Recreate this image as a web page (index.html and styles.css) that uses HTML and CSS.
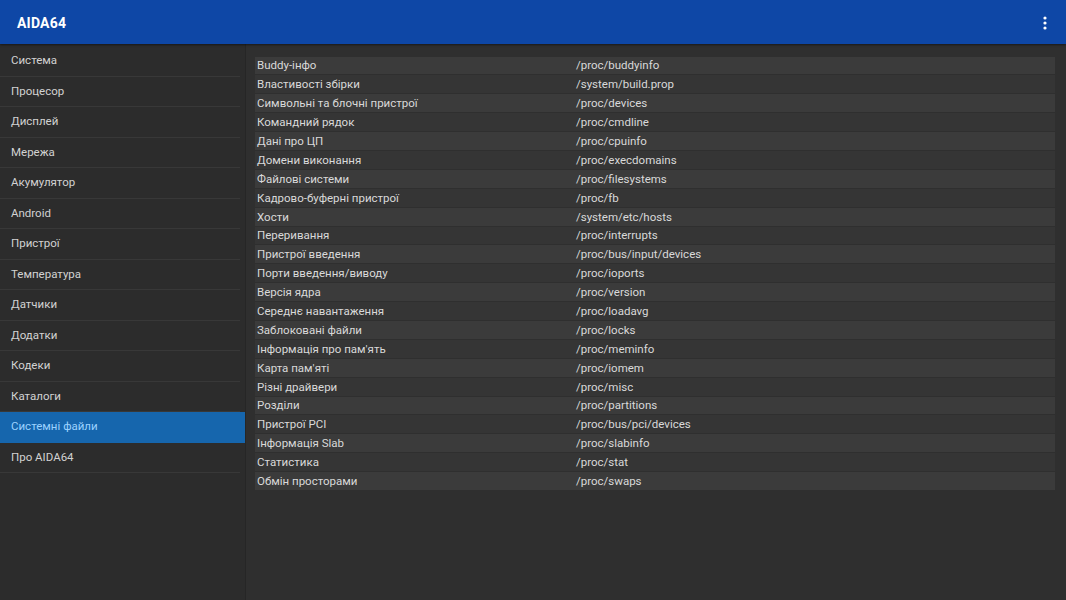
FILE: index.html
```html
<!DOCTYPE html>
<html lang="uk">
<head>
<meta charset="utf-8">
<title>AIDA64</title>
<link rel="stylesheet" href="styles.css">
</head>
<body>
<header class="appbar">
  <div class="title">AIDA64</div>
  <svg class="menu" width="4" height="14" viewBox="0 0 4 14"><circle cx="2" cy="2" r="1.6" fill="#fff"/><circle cx="2" cy="7" r="1.6" fill="#fff"/><circle cx="2" cy="12" r="1.6" fill="#fff"/></svg>
</header>
<div class="main">
  <nav class="sidebar">
    <div class="item">Система</div>
    <div class="item">Процесор</div>
    <div class="item">Дисплей</div>
    <div class="item">Мережа</div>
    <div class="item">Акумулятор</div>
    <div class="item">Android</div>
    <div class="item">Пристрої</div>
    <div class="item">Температура</div>
    <div class="item">Датчики</div>
    <div class="item">Додатки</div>
    <div class="item">Кодеки</div>
    <div class="item">Каталоги</div>
    <div class="item selected">Системні файли</div>
    <div class="item">Про AIDA64</div>
  </nav>
  <section class="content">
    <div class="table">
      <div class="row"><span class="c1">Buddy-інфо</span><span class="c2">/proc/buddyinfo</span></div>
      <div class="row"><span class="c1">Властивості збірки</span><span class="c2">/system/build.prop</span></div>
      <div class="row"><span class="c1">Символьні та блочні пристрої</span><span class="c2">/proc/devices</span></div>
      <div class="row"><span class="c1">Командний рядок</span><span class="c2">/proc/cmdline</span></div>
      <div class="row"><span class="c1">Дані про ЦП</span><span class="c2">/proc/cpuinfo</span></div>
      <div class="row"><span class="c1">Домени виконання</span><span class="c2">/proc/execdomains</span></div>
      <div class="row"><span class="c1">Файлові системи</span><span class="c2">/proc/filesystems</span></div>
      <div class="row"><span class="c1">Кадрово-буферні пристрої</span><span class="c2">/proc/fb</span></div>
      <div class="row"><span class="c1">Хости</span><span class="c2">/system/etc/hosts</span></div>
      <div class="row"><span class="c1">Переривання</span><span class="c2">/proc/interrupts</span></div>
      <div class="row"><span class="c1">Пристрої введення</span><span class="c2">/proc/bus/input/devices</span></div>
      <div class="row"><span class="c1">Порти введення/виводу</span><span class="c2">/proc/ioports</span></div>
      <div class="row"><span class="c1">Версія ядра</span><span class="c2">/proc/version</span></div>
      <div class="row"><span class="c1">Середнє навантаження</span><span class="c2">/proc/loadavg</span></div>
      <div class="row"><span class="c1">Заблоковані файли</span><span class="c2">/proc/locks</span></div>
      <div class="row"><span class="c1">Інформація про пам'ять</span><span class="c2">/proc/meminfo</span></div>
      <div class="row"><span class="c1">Карта пам'яті</span><span class="c2">/proc/iomem</span></div>
      <div class="row"><span class="c1">Різні драйвери</span><span class="c2">/proc/misc</span></div>
      <div class="row"><span class="c1">Розділи</span><span class="c2">/proc/partitions</span></div>
      <div class="row"><span class="c1">Пристрої PCI</span><span class="c2">/proc/bus/pci/devices</span></div>
      <div class="row"><span class="c1">Інформація Slab</span><span class="c2">/proc/slabinfo</span></div>
      <div class="row"><span class="c1">Статистика</span><span class="c2">/proc/stat</span></div>
      <div class="row"><span class="c1">Обмін просторами</span><span class="c2">/proc/swaps</span></div>
    </div>
  </section>
</div>
</body>
</html>
```
FILE: styles.css
```css
html, body {
  margin: 0;
  padding: 0;
  height: 100%;
}
body {
  background: #2f2f2f;
  font-family: Roboto, "Noto Sans", sans-serif;
  color: #d6d6d6;
  display: flex;
  flex-direction: column;
  overflow: hidden;
}
.appbar {
  height: 44px;
  flex: none;
  background: #0e47a6;
  display: flex;
  align-items: center;
  justify-content: space-between;
  padding: 1px 19px 0 17px;
  box-sizing: border-box;
  box-shadow: 0 1px 2px rgba(0,0,0,0.5);
  position: relative;
  z-index: 1;
}
.title {
  color: #fff;
  font-weight: bold;
  font-size: 14px;
  letter-spacing: 0.2px;
}
.menu {
  display: block;
}
.main {
  flex: 1;
  display: flex;
  min-height: 0;
}
.sidebar {
  width: 246px;
  flex: none;
  background: #2c2c2c;
  border-right: 1px solid #262626;
  padding-top: 2px;
  box-sizing: border-box;
}
.item {
  height: 29.54px;
  line-height: 29.54px;
  border-bottom: 1px solid #383838;
  padding-left: 11px;
  font-size: 11.5px;
  color: #d2d2d2;
  margin-right: 5px;
}
.item.selected {
  background: #1666ad;
  color: #9cd2ff;
  margin-right: 0;
  border-bottom-color: #1666ad;
}
.content {
  flex: 1;
  padding: 12.5px 11px 0 9px;
}
.table {
  display: flex;
  flex-direction: column;
  gap: 1px;
}
.row {
  height: 17.9px;
  display: flex;
  align-items: center;
  font-size: 11.5px;
  background: #383838;
  color: #d9d9d9;
}
.row:nth-child(odd) {
  background: #3b3b3b;
}
.row:nth-child(even) {
  background: #353535;
}
.c1 {
  width: 319px;
  padding-left: 2px;
  flex: none;
}
.c2 {
  flex: 1;
}
```
